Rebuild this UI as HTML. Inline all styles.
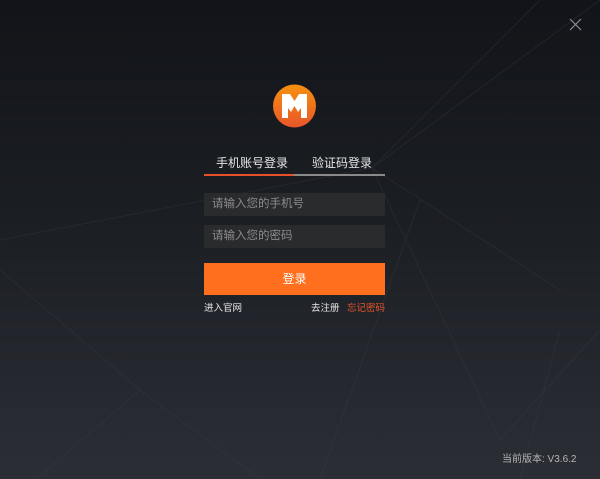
<!DOCTYPE html>
<html><head><meta charset="utf-8"><style>
html,body{margin:0;width:600px;height:479px;overflow:hidden}
body{background:linear-gradient(180deg,#121419 0%,#1b1e23 45%,#2b2e35 100%);font-family:"Liberation Sans","Noto Sans CJK SC",sans-serif;position:relative}
.a{position:absolute;white-space:nowrap}
svg{display:block}
.inp{position:absolute;left:204px;width:181px;height:23px;background:#2a2b2d;color:#8c8c8c;font-size:11.5px;line-height:23px;box-sizing:border-box;padding-left:8px}
</style></head><body>
<svg class="a" style="left:0;top:0" width="600" height="479">
<g stroke="#3a3d44" stroke-width="1" fill="none" opacity="0.35">
<line x1="0" y1="240" x2="372" y2="168"/>
<line x1="372" y1="168" x2="600" y2="0"/>
<line x1="372" y1="168" x2="540" y2="0"/>
<line x1="372" y1="168" x2="560" y2="290"/>
<line x1="372" y1="168" x2="500" y2="440"/>
<line x1="420" y1="200" x2="320" y2="479"/>
<line x1="140" y1="390" x2="0" y2="510"/>
<line x1="140" y1="390" x2="260" y2="479"/>
<line x1="500" y1="440" x2="600" y2="330"/>
<line x1="560" y1="330" x2="520" y2="479"/>
<line x1="0" y1="270" x2="140" y2="390"/>
</g>
<g stroke="#8a8c90" stroke-width="1.2"><line x1="570" y1="19" x2="581" y2="30"/><line x1="581" y1="19" x2="570" y2="30"/></g>
<defs><linearGradient id="g" x1="0" y1="0" x2="0" y2="1"><stop offset="0" stop-color="#f7900f"/><stop offset="1" stop-color="#e8562a"/></linearGradient></defs>
<circle cx="294.5" cy="106" r="21.5" fill="url(#g)"/>
<path d="M282 94 H290 L294.5 101 L299 94 H307 V118 H301 V108 L298 112 L294.5 106 L291 112 L288 108 V118 H282 Z" fill="#fff"/>
</svg>
<div class="a" style="left:216px;top:154px;font-size:12px;color:#e6e6e6">手机账号登录</div>
<div class="a" style="left:312px;top:154px;font-size:12px;color:#e6e6e6">验证码登录</div>
<div class="a" style="left:204px;top:174px;width:90px;height:2px;background:#e6502a"></div>
<div class="a" style="left:294px;top:174px;width:91px;height:2px;background:#8a8a8a"></div>
<div class="inp" style="top:193px">请输入您的手机号</div>
<div class="inp" style="top:225px">请输入您的密码</div>
<div class="a" style="left:204px;top:263px;width:181px;height:32px;background:#ff6f1e;color:#fff;font-size:12px;line-height:32px;text-align:center">登录</div>
<div class="a" style="left:204px;top:300px;font-size:9.5px;color:#e6e6e6">进入官网</div>
<div class="a" style="left:311px;top:300px;font-size:9.5px;color:#e6e6e6">去注册</div>
<div class="a" style="left:347px;top:300px;font-size:9.5px;color:#ea5428">忘记密码</div>
<div class="a" style="left:502px;top:450px;font-size:10px;color:#b5b5b5">当前版本: V3.6.2</div>
</body></html>
